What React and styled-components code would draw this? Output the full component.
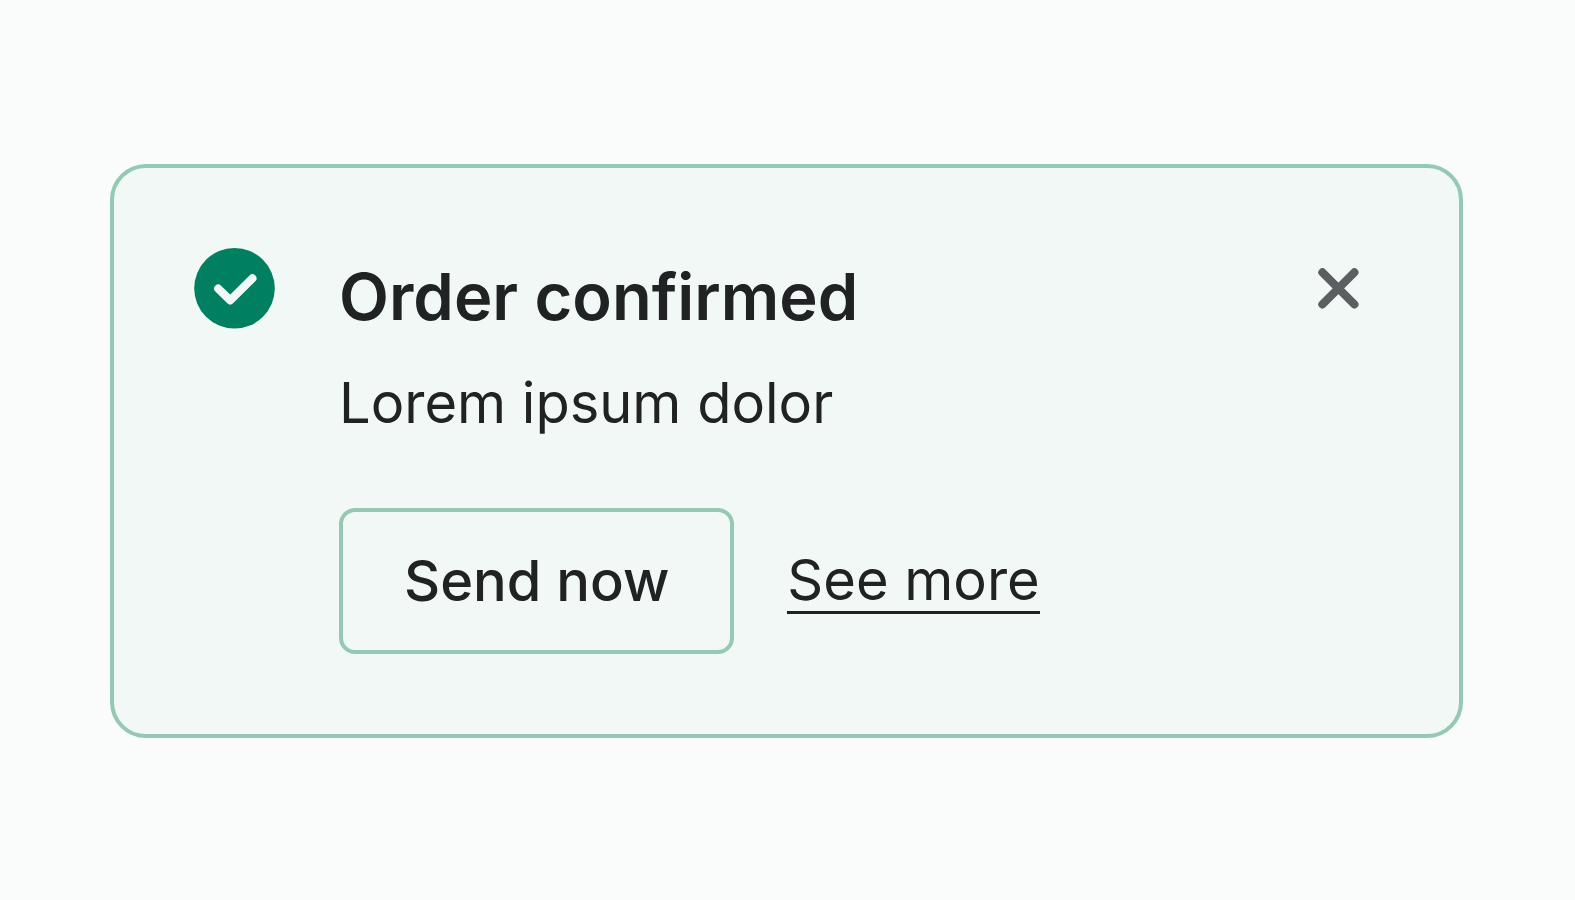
import React from "react";
import styled, { createGlobalStyle } from "styled-components";

const GlobalStyle = createGlobalStyle`
  *, *::before, *::after { box-sizing: border-box; }
  body {
    margin: 0;
    background: #fafcfb;
    color: #202223;
    font-family: Inter, "Liberation Sans", sans-serif;
  }
`;

const Page = styled.main`
  min-height: 100vh;
  padding: 2px 112px 0 110px;
  display: flex;
  align-items: center;
`;

const Banner = styled.section`
  flex: 1;
  display: flex;
  align-items: flex-start;
  padding: 80px;
  border: 4px solid #95c9b4;
  border-radius: 36px;
  background: #f1f8f5;
`;

const StatusIcon = styled.svg`
  flex: none;
  width: 81px;
  height: 81px;
  margin-right: 64px;
`;

const Content = styled.div`
  flex: 1;
  display: flex;
  flex-direction: column;
`;

const Title = styled.h2`
  margin: 0;
  padding-top: 8px;
  font-size: 65px;
  line-height: 82px;
  font-weight: 600;
`;

const Message = styled.p`
  margin: 0;
  padding-top: 24px;
  font-size: 56px;
  line-height: 82px;
`;

const Actions = styled.div`
  display: flex;
  align-items: center;
  gap: 53px;
  margin-top: 64px;
`;

const ActionButton = styled.button`
  height: 146px;
  padding: 0 61px;
  border: 4px solid #95c9b4;
  border-radius: 16px;
  background: transparent;
  color: inherit;
  font: inherit;
  font-size: 56px;
  font-weight: 500;
  cursor: pointer;
`;

const ActionLink = styled.a`
  color: inherit;
  font-size: 56px;
  line-height: 62px;
  text-decoration: none;
  border-bottom: 3px solid currentColor;
`;

const CloseButton = styled.button`
  flex: none;
  display: flex;
  width: 80px;
  height: 80px;
  padding: 0;
  border: 0;
  background: none;
  color: #5c5f62;
  cursor: pointer;
`;

export default function App() {
  return (
    <>
      <GlobalStyle />
      <Page>
        <Banner aria-labelledby="banner-title">
          <StatusIcon viewBox="0 0 81 81" aria-hidden="true">
            <circle cx="40.5" cy="40.3" r="40.3" fill="#008060" />
            <path d="M24.2 40.6L36.2 52.3L58.4 30.4" fill="none" stroke="#f1f8f5" strokeWidth="8.2" strokeLinecap="round" strokeLinejoin="round" />
          </StatusIcon>
          <Content>
            <Title id="banner-title">Order confirmed</Title>
            <Message>Lorem ipsum dolor</Message>
            <Actions>
              <ActionButton type="button">Send now</ActionButton>
              <ActionLink href="#more">See more</ActionLink>
            </Actions>
          </Content>
          <CloseButton type="button" aria-label="Dismiss">
            <svg width="80" height="80" viewBox="0 0 80 80" aria-hidden="true">
              <path d="M23.4 24.4L55.4 56.4M55.4 24.4L23.4 56.4" fill="none" stroke="currentColor" strokeWidth="8.2" strokeLinecap="round" />
            </svg>
          </CloseButton>
        </Banner>
      </Page>
    </>
  );
}
